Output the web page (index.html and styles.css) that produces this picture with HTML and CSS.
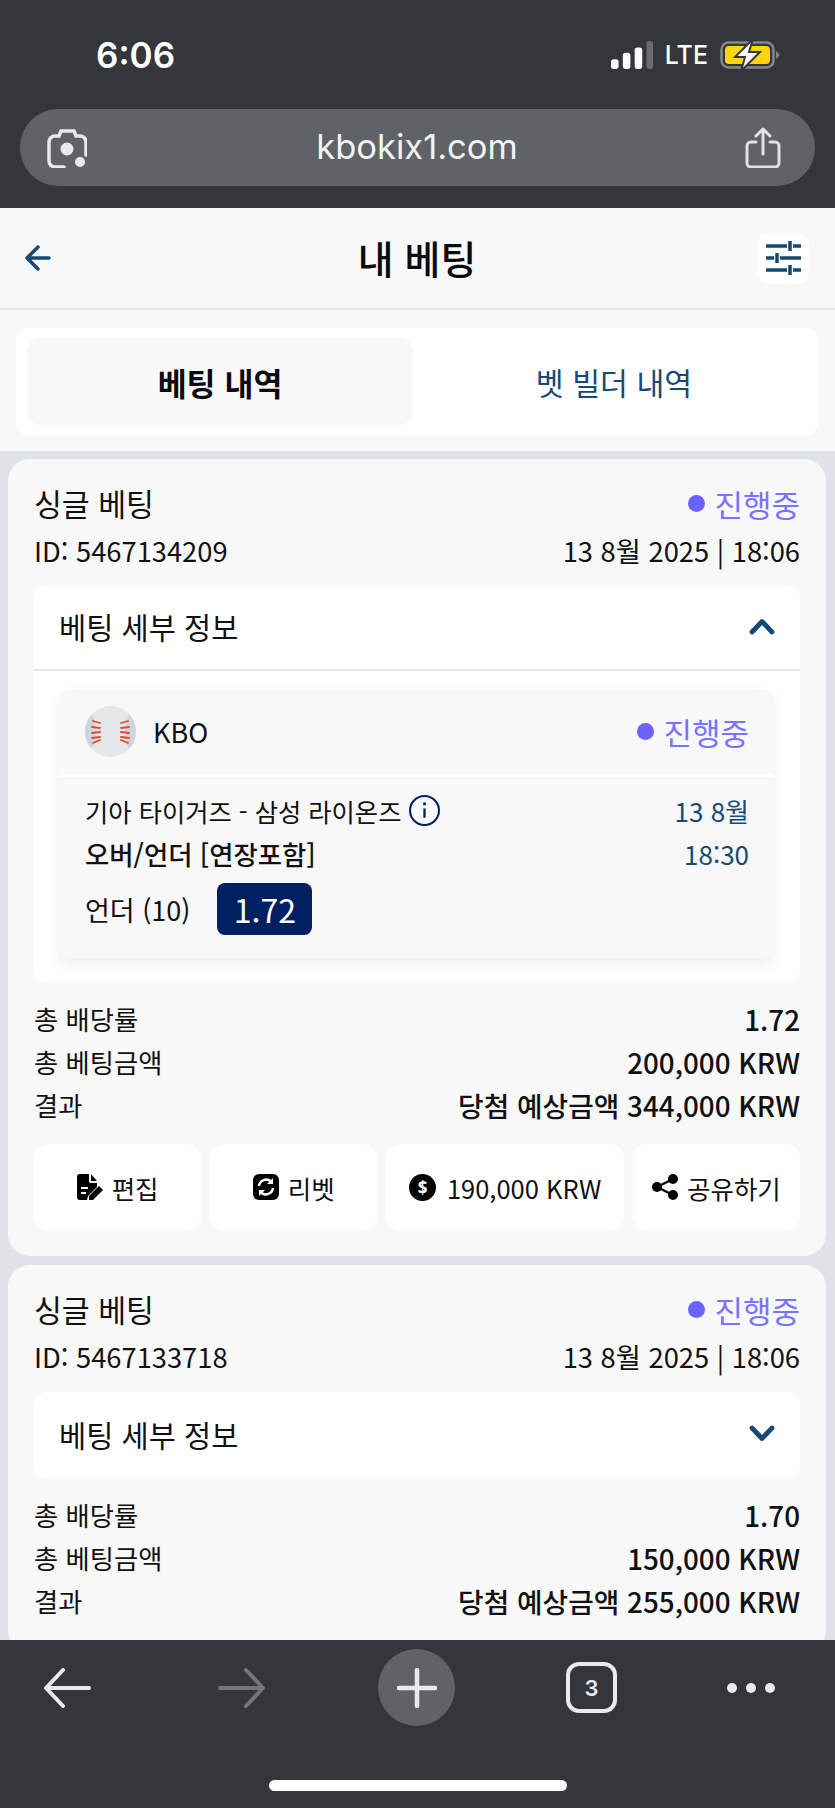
FILE: index.html
```html
<!DOCTYPE html>
<html lang="ko">
<head>
<meta charset="utf-8">
<title>내 베팅</title>
<link rel="stylesheet" href="styles.css">
</head>
<body>
<div class="phone">
  <div class="top-chrome">
    <div class="status-bar">
      <span class="time">6:06</span>
      <div class="status-icons">
        <svg class="signal" width="42" height="28" viewBox="0 0 39 26"><rect x="0" y="17" width="7" height="9" rx="2.5" fill="#fff"/><rect x="11" y="11" width="7" height="15" rx="2.5" fill="#fff"/><rect x="22" y="6" width="7" height="20" rx="2.5" fill="#fff"/><rect x="33" y="0" width="6" height="26" rx="2.5" fill="#6a6d70"/></svg>
        <span class="lte">LTE</span>
        <svg class="battery" width="60" height="32" viewBox="0 0 60 32"><rect x="1.5" y="3.5" width="52" height="25" rx="7" fill="none" stroke="#85888b" stroke-width="2.5"/><rect x="5" y="7" width="45" height="18" rx="4" fill="#ffd60a"/><path d="M56 12l3.500 3.500a1 1 0 0 1 0 1L56 20z" fill="#85888b"/><path d="M33 0L15 18h10l-4 14 19-19H29z" fill="#fff" stroke="#33363a" stroke-width="2"/></svg>
      </div>
    </div>
    <div class="address-bar">
      <svg class="lens" width="40" height="40" viewBox="0 0 40 40" fill="none" stroke="#e8eaed" stroke-width="3.500" stroke-linecap="round"><path d="M17 39H8a6 6 0 0 1-6-6V14a6 6 0 0 1 6-6h4l2-5h13l2 5h4a6 6 0 0 1 6 6v13"/><circle cx="20" cy="21" r="6.500" fill="#e8eaed" stroke="none"/><circle cx="33" cy="34" r="5" fill="#e8eaed" stroke="none"/></svg>
      <span class="url">kbokix1.com</span>
      <svg class="share-ios" width="36" height="41" viewBox="0 0 36 41" fill="none" stroke="#dfe1e4" stroke-width="3" stroke-linecap="round" stroke-linejoin="round"><path d="M11 15H6a4 4 0 0 0-4 4v17a4 4 0 0 0 4 4h24a4 4 0 0 0 4-4V19a4 4 0 0 0-4-4h-5"/><path d="M18 27V2M11 9l7-7 7 7"/></svg>
    </div>
  </div>

  <header class="page-header">
    <svg class="back" width="26" height="26" viewBox="0 0 26 26" fill="none" stroke="#164a75" stroke-width="3.500" stroke-linecap="round" stroke-linejoin="round"><path d="M24 13H3M13 2L2 13l11 11"/></svg>
    <h1 class="page-title">내 베팅</h1>
    <div class="filter-btn">
      <svg width="35" height="34" viewBox="0 0 35 34" fill="none" stroke="#164a75" stroke-width="3.500"><path d="M0 5h21M27 5h8M24 0v10M0 17h8M14 17h21M11 12v10M0 29h21M27 29h8M24 24v10"/></svg>
    </div>
  </header>

  <div class="tabs-wrap">
    <div class="tabs">
      <div class="tab tab-active">베팅 내역</div>
      <div class="tab tab-other">벳 빌더 내역</div>
    </div>
  </div>

  <main class="content">
    <section class="card">
      <div class="row card-title-row">
        <span class="card-title">싱글 베팅</span>
        <span class="status"><i class="dot"></i>진행중</span>
      </div>
      <div class="row meta-row">
        <span>ID: 5467134209</span>
        <span>13 8월 2025 | 18:06</span>
      </div>
      <div class="details details-open">
        <div class="details-head details-head-open">
          <span>베팅 세부 정보</span>
          <svg width="26" height="17" viewBox="0 0 26 17" fill="none" stroke="#164a75" stroke-width="4.800" stroke-linecap="round" stroke-linejoin="round"><path d="M3 14L13 3.500 23 14"/></svg>
        </div>
        <div class="selection">
          <div class="league">
            <div class="league-name">
              <svg width="51" height="51" viewBox="0 0 51 51"><circle cx="25.500" cy="25.500" r="25.500" fill="#e5e6e8"/><path d="M7 8A25.500 25.500 0 0 0 7 43Q15 25.500 7 8zM44 8A25.500 25.500 0 0 1 44 43Q36 25.500 44 8z" fill="#ced6dc"/><path d="M8 15l7 2M7 21l8 1M7 27l8-1M7 32l8-1M8 37l7-3M43 15l-7 2M44 21l-8 1M44 27l-8-1M44 32l-8-1M43 37l-7-3" stroke="#e2492f" stroke-width="1.800" stroke-linecap="round" fill="none"/></svg>
              <span>KBO</span>
            </div>
            <span class="status"><i class="dot"></i>진행중</span>
          </div>
          <div class="selection-body">
            <div class="row sel-row">
              <span class="teams">기아 타이거즈 - 삼성 라이온즈
                <svg class="info" width="31" height="31" viewBox="0 0 30 30" fill="none" stroke="#012060" stroke-width="2"><circle cx="15" cy="15" r="14"/><path d="M15 13v9" stroke-width="2.200"/><circle cx="15" cy="8.500" r="1.500" fill="#012060" stroke="none"/></svg>
              </span>
              <span class="blue">13 8월</span>
            </div>
            <div class="row sel-row">
              <span class="market">오버/언더 [연장포함]</span>
              <span class="blue">18:30</span>
            </div>
            <div class="pick">
              <span>언더 (10)</span>
              <span class="odds">1.72</span>
            </div>
          </div>
        </div>
      </div>
      <div class="summary">
        <div class="row sum-row"><span>총 배당률</span><b>1.72</b></div>
        <div class="row sum-row"><span>총 베팅금액</span><b>200,000 KRW</b></div>
        <div class="row sum-row"><span>결과</span><b>당첨 예상금액 344,000 KRW</b></div>
      </div>
      <div class="actions">
        <div class="action">
          <svg width="26" height="26" viewBox="0 0 26 26"><path d="M3 0h9v7a2 2 0 0 0 2 2h6v4l-9 9-1 4H3a3 3 0 0 1-3-3V3a3 3 0 0 1 3-3z"/><path d="M14 0l6 7h-6z"/><path d="M4 14h7M4 19h5" stroke="#fff" stroke-width="2" fill="none"/><path d="M22 12l4 4-10 10h-4v-4z"/></svg>
          <span>편집</span>
        </div>
        <div class="action">
          <svg width="26" height="26" viewBox="0 0 26 26"><rect width="26" height="26" rx="6"/><path d="M6 12a7.200 7.200 0 0 1 12-4.500M20 14a7.200 7.200 0 0 1-12 4.500" stroke="#fff" stroke-width="2.400" fill="none"/><path d="M20 4v6h-6zM6 22v-6h6z" fill="#fff"/></svg>
          <span>리벳</span>
        </div>
        <div class="action action-wide">
          <svg width="27" height="27" viewBox="0 0 27 27"><circle cx="13.500" cy="13.500" r="13.500"/><text x="13.500" y="19.500" text-anchor="middle" class="dollar">$</text></svg>
          <span>190,000 KRW</span>
        </div>
        <div class="action">
          <svg width="26" height="26" viewBox="0 0 26 26"><circle cx="5" cy="13" r="5"/><circle cx="21" cy="5" r="5"/><circle cx="21" cy="21" r="5"/><path d="M5 13L21 5M5 13l16 8" stroke="#000" stroke-width="2.500"/></svg>
          <span>공유하기</span>
        </div>
      </div>
    </section>

    <section class="card">
      <div class="row card-title-row">
        <span class="card-title">싱글 베팅</span>
        <span class="status"><i class="dot"></i>진행중</span>
      </div>
      <div class="row meta-row">
        <span>ID: 5467133718</span>
        <span>13 8월 2025 | 18:06</span>
      </div>
      <div class="details">
        <div class="details-head">
          <span>베팅 세부 정보</span>
          <svg width="26" height="17" viewBox="0 0 26 17" fill="none" stroke="#164a75" stroke-width="4.800" stroke-linecap="round" stroke-linejoin="round"><path d="M3 3l10 10.500L23 3"/></svg>
        </div>
      </div>
      <div class="summary">
        <div class="row sum-row"><span>총 배당률</span><b>1.70</b></div>
        <div class="row sum-row"><span>총 베팅금액</span><b>150,000 KRW</b></div>
        <div class="row sum-row"><span>결과</span><b>당첨 예상금액 255,000 KRW</b></div>
      </div>
    </section>
  </main>

  <footer class="bottom-chrome">
    <div class="toolbar">
      <div class="tool"><svg width="48" height="40" viewBox="0 0 48 40" fill="none" stroke="#e8eaed" stroke-width="4" stroke-linecap="round" stroke-linejoin="round"><path d="M46 20H3M20 2L3 20l17 18"/></svg></div>
      <div class="tool"><svg width="48" height="40" viewBox="0 0 48 40" fill="none" stroke="#74777a" stroke-width="4" stroke-linecap="round" stroke-linejoin="round"><path d="M2 20h43M28 2l17 18-17 18"/></svg></div>
      <div class="tool plus">
        <svg width="40" height="40" viewBox="0 0 40 40" fill="none" stroke="#e8eaed" stroke-width="4.500" stroke-linecap="round"><path d="M20 2v36M2 20h36"/></svg>
      </div>
      <div class="tool"><div class="tab-count">3</div></div>
      <div class="tool tool-more"><div class="more"><i></i><i></i><i></i></div></div>
    </div>
    <div class="home-indicator"></div>
  </footer>
</div>
</body>
</html>
```
FILE: styles.css
```css
* { box-sizing: border-box; }
html, body { margin: 0; padding: 0; }
body {
  width: 835px;
  height: 1808px;
  overflow: hidden;
  font-family: "Noto Sans CJK KR", "Noto Sans", sans-serif;
  color: #111;
  background: #dfe3e8;
}
.phone { display: flex; flex-direction: column; height: 1808px; }

/* browser chrome, top */
.top-chrome { background: #33363a; height: 208px; flex: none; padding: 0 20px; }
.status-bar { height: 109px; display: flex; justify-content: space-between; align-items: flex-start; padding: 34px 35px 0 76px; }
.time { font-family: Inter, "Liberation Sans", sans-serif; font-weight: 600; font-size: 35px; line-height: 42px; color: #fff; }
.status-icons { display: flex; align-items: center; gap: 12px; height: 42px; }
.lte { font-family: Inter, "Liberation Sans", sans-serif; font-weight: 500; font-size: 25px; color: #fff; line-height: 42px; }
.address-bar { height: 77px; border-radius: 38px; background: #5f6367; display: flex; align-items: center; justify-content: space-between; padding: 0 34px 0 27px; }
.url { font-family: Inter, "Liberation Sans", sans-serif; font-size: 34.5px; color: #f1f3f4; margin: -2px 0 0 2px; }

/* page header */
.page-header { height: 102px; flex: none; background: #f8f8f8; border-bottom: 2px solid #e3e5ea; display: grid; grid-template-columns: 1fr auto 1fr; align-items: center; padding: 0 26px 0 25px; }
.page-title { margin: 0 0 2px; font-size: 39px; font-weight: 500; color: #0b0b0b; }
.filter-btn { justify-self: end; width: 51px; height: 51px; border-radius: 12px; background: #fff; display: flex; align-items: center; justify-content: center; }

/* tabs */
.tabs-wrap { height: 141px; flex: none; background: #f8f8f8; padding: 18px 17px 15px 16px; }
.tabs { height: 107px; background: #fff; border-radius: 12px; padding: 10px 11px; display: flex; }
.tab { flex: 1; display: flex; align-items: center; justify-content: center; border-radius: 14px; font-size: 30.3px; color: #164a75; }
.tab-other { padding-left: 8px; }
.tab-active { flex: 0 0 386px; background: #f8f8f8; color: #0b0b0b; font-size: 31.5px; font-weight: 700; }

/* list */
.content { flex: 1; min-height: 0; overflow: hidden; padding: 8px 9px 0 8px; display: flex; flex-direction: column; gap: 9px; }
.card { background: #f8f8f8; border-radius: 22px; padding: 22px 26px 26px; flex: none; }
.row { display: flex; justify-content: space-between; align-items: center; }
.card-title-row { height: 44px; }
.card-title { font-size: 30.3px; }
.status { display: inline-flex; align-items: center; font-size: 31px; color: #7a73ff; }
.dot { width: 17px; height: 17px; border-radius: 50%; background: #6a63ff; margin-right: 9px; }
.meta-row { height: 44px; margin-top: 3px; font-size: 27.3px; }

.details { background: #fff; border-radius: 12px; margin-top: 14px; }
.details-open { padding: 0 26px 23px 25px; }
.details-head { height: 86px; display: flex; align-items: center; justify-content: space-between; font-size: 29.5px; padding: 0 25px 3px 25px; }
.details-head-open { margin: 0 -26px 18px -25px; height: 85px; border-bottom: 2px solid #e3e5ea; }

.selection { background: #f8f8f8; border-radius: 12px; box-shadow: 0 6px 14px rgba(20, 30, 50, 0.07); }
.league { height: 88px; border-bottom: 3px solid #fff; display: flex; align-items: center; justify-content: space-between; padding: 0 25px 0 26px; }
.league-name { display: flex; align-items: center; gap: 17px; font-size: 27px; }
.selection-body { padding: 13px 25px 24px 26px; }
.sel-row { height: 43px; font-size: 26px; padding-bottom: 2px; }
.teams { display: inline-flex; align-items: center; gap: 8px; font-size: 25.3px; }
.market { font-weight: 500; font-size: 26.4px; }
.blue { color: #164a75; }
.pick { display: flex; align-items: center; gap: 27px; font-size: 27px; margin-top: 7px; }
.odds { width: 95px; height: 52px; border-radius: 8px; background: #012060; color: #fff; font-size: 32px; display: flex; align-items: center; justify-content: center; }

.summary { margin-top: 19px; }
.sum-row { height: 43px; font-size: 26.3px; padding-bottom: 8px; }
.sum-row b { font-weight: 500; font-size: 27.8px; }

.actions { display: grid; grid-template-columns: 1fr 1fr 1.42fr 1fr; gap: 9px; margin-top: 14px; }
.action { height: 86px; background: #fff; border-radius: 14px; display: flex; align-items: center; justify-content: center; gap: 9px; font-size: 25.5px; }
.action-wide { gap: 11px; }
.dollar { fill: #fff; font-family: "Noto Sans", sans-serif; font-size: 17px; font-weight: 700; }

/* browser chrome, bottom */
.bottom-chrome { height: 168px; flex: none; background: #33363a; padding-top: 9px; }
.toolbar { height: 77px; display: flex; align-items: center; gap: 98px; padding-left: 28px; }
.tool { width: 77px; height: 77px; flex: none; display: flex; align-items: center; justify-content: center; }
.tool-more { margin-left: -16px; }
.plus { border-radius: 50%; background: #5f6367; }
.tab-count { width: 51px; height: 51px; border: 4px solid #e8eaed; border-radius: 13px; display: flex; align-items: center; justify-content: center; font-family: Inter, "Liberation Sans", sans-serif; font-weight: 600; font-size: 22px; color: #e8eaed; }
.more { display: flex; gap: 9px; }
.more i { width: 10px; height: 10px; border-radius: 50%; background: #e8eaed; }
.home-indicator { width: 298px; height: 11px; border-radius: 6px; background: #fff; margin: 54px auto 0; }
```
